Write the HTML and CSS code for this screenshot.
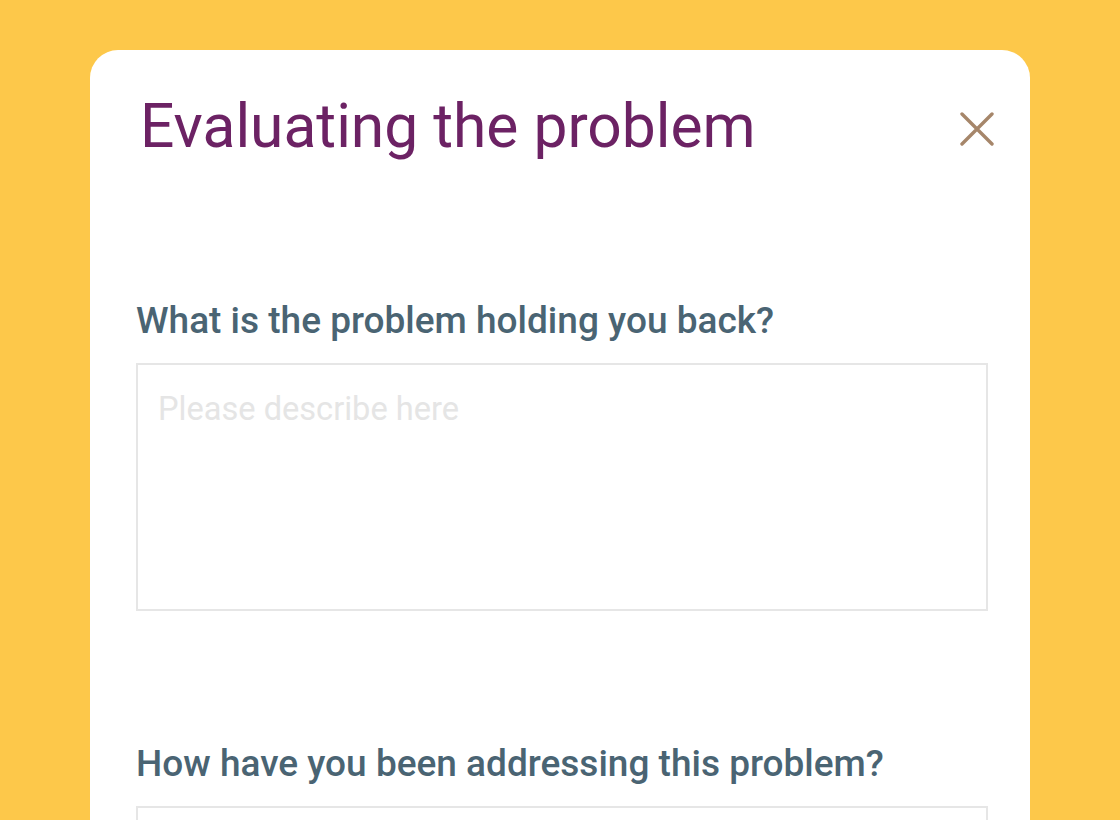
FILE: index.html
```html
<!DOCTYPE html>
<html lang="en">
<head>
<meta charset="utf-8">
<title>Evaluating the problem</title>
<link rel="stylesheet" href="styles.css">
</head>
<body>
<div class="page">
  <section class="card">
    <header class="card-head">
      <h1 class="title">Evaluating the problem</h1>
      <button class="close" aria-label="Close">
        <svg width="34" height="34" viewBox="0 0 34 34"><path d="M2 2 L32 32 M32 2 L2 32" stroke="#a6866a" stroke-width="3.4" stroke-linecap="round" fill="none"/></svg>
      </button>
    </header>
    <div class="field">
      <label class="label" for="q1">What is the problem holding you back?</label>
      <textarea id="q1" class="input" placeholder="Please describe here"></textarea>
    </div>
    <div class="field">
      <label class="label" for="q2">How have you been addressing this problem?</label>
      <textarea id="q2" class="input"></textarea>
    </div>
  </section>
</div>
</body>
</html>
```

FILE: styles.css
```css
html, body {
  margin: 0;
  padding: 0;
  height: 100%;
  overflow: hidden;
}
body {
  background: #fdc84a;
  font-family: Roboto, "Noto Sans", sans-serif;
}
.page {
  padding: 50px 90px 0 90px;
}
.card {
  background: #ffffff;
  border-radius: 28px;
  padding: 0 42px 0 46px;
  height: 900px;
}
.card-head {
  display: flex;
  align-items: center;
  justify-content: space-between;
  height: 158px;
}
.title {
  margin: 0 0 4px 0;
  font-weight: 400;
  font-size: 60.5px;
  color: #6c2264;
  line-height: 1;
  padding-left: 4px;
}
.close {
  background: none;
  border: none;
  padding: 0;
  margin-right: -6px;
  width: 34px;
  height: 34px;
  display: flex;
}
.field {
  display: flex;
  flex-direction: column;
}
.label {
  font-size: 37px;
  font-weight: 500;
  color: #4a6473;
  margin-top: 91px;
  line-height: 44px;
}
.field + .field .label {
  margin-top: 131px;
}
.input {
  margin-top: 20px;
  height: 248px;
  box-sizing: border-box;
  border: 2px solid #e6e6e6;
  resize: none;
  padding: 24px 20px;
  font-family: Roboto, "Noto Sans", sans-serif;
  font-size: 32.6px;
  line-height: 40px;
  outline: none;
}
.input::placeholder {
  color: #e5e5e5;
}
```
